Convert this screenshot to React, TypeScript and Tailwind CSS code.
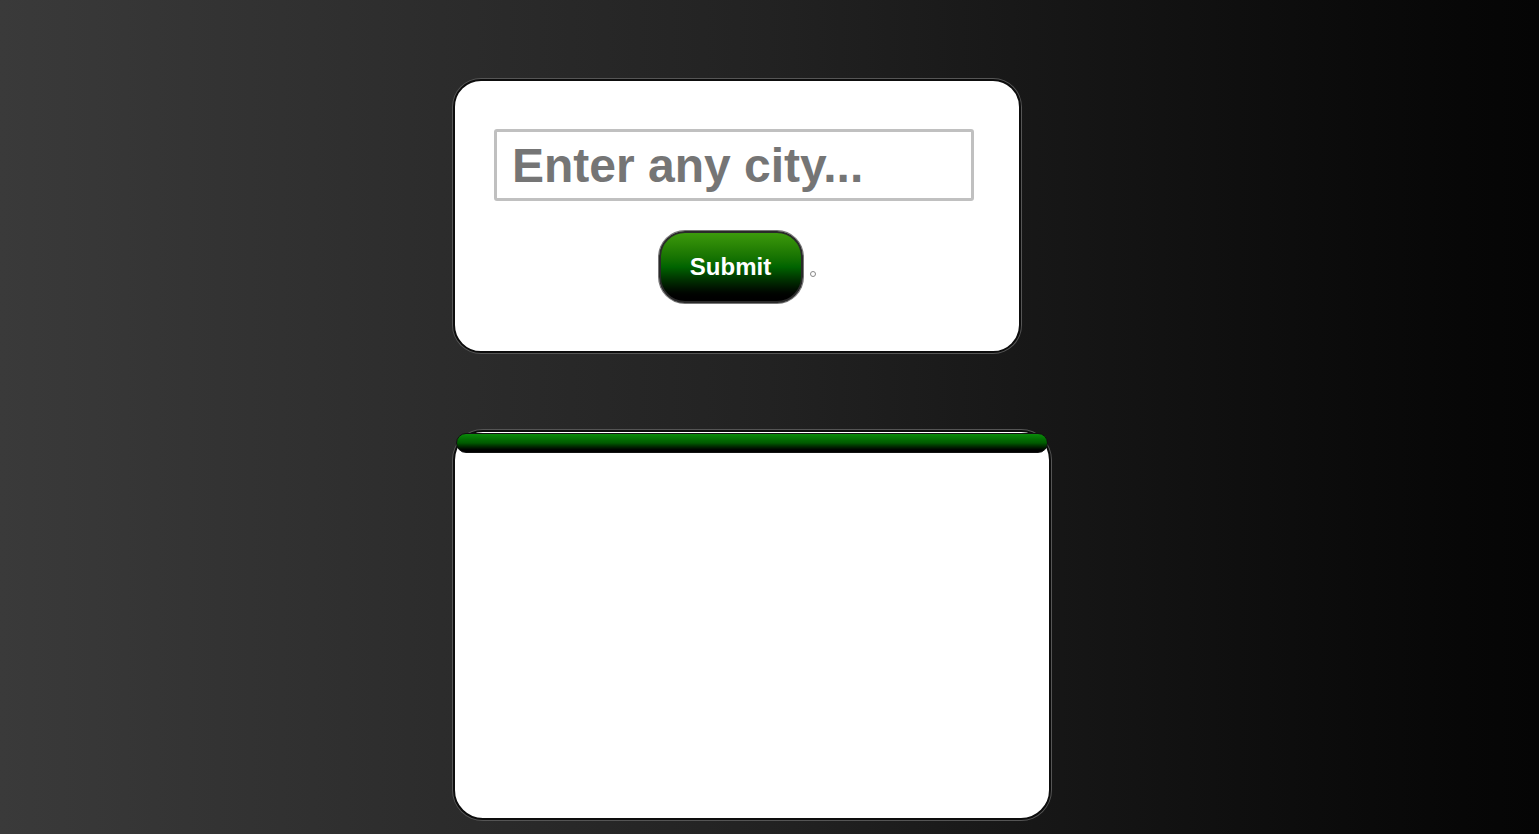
import React from "react";

export default function App() {
  return (
    <div
      className="w-[1539px] h-[834px] overflow-hidden bg-gradient-to-r from-[#3a3a3a] via-[#222222] to-[#050505]"
      style={{ fontFamily: '"Liberation Sans", Arial, sans-serif' }}
    >
      <div className="flex flex-col items-start pl-[453px] pt-[79px]">
        {/* Search card */}
        <div className="w-[568px] h-[274px] bg-white rounded-[28px] border-2 border-[#0d0d0d] shadow-[0_0_0_1px_#555555] flex flex-col items-center pt-[48px]">
          <div className="w-[480px] h-[72px] mr-[6px] border-[3px] border-[#c0c0c0] rounded-[3px] flex items-center pl-[15px]">
            <input
              className="w-full h-full outline-none bg-transparent text-[48px] font-bold text-[#757575] placeholder:text-[#757575] leading-none"
              placeholder="Enter any city..."
              style={{ fontFamily: '"Liberation Sans", Arial, sans-serif' }}
            />
          </div>
          <div className="flex items-center mt-[30px]">
            <button
              className="w-[144px] h-[72px] rounded-[26px] border-2 border-[#2a2a2a] bg-gradient-to-b from-[#3c9a0c] via-[#006400] to-[#000000] text-white text-[24px] font-bold shadow-[0_0_0_1px_#777777]"
              style={{ fontFamily: '"Liberation Sans", Arial, sans-serif' }}
            >
              Submit
            </button>
            <span className="ml-[7px] mt-[14px] w-[6px] h-[6px] rounded-full border border-[#888888]" />
          </div>
        </div>

        {/* Result card */}
        <div className="mt-[77px] w-[598px] h-[390px] bg-white rounded-[30px] border-2 border-[#0d0d0d] shadow-[0_0_0_1px_#555555] p-[1px]">
          <div className="h-[20px] rounded-[10px] border border-[#111111] bg-gradient-to-b from-[#0b8a0b] via-[#005a00] to-[#000000]" />
        </div>
      </div>
    </div>
  );
}
